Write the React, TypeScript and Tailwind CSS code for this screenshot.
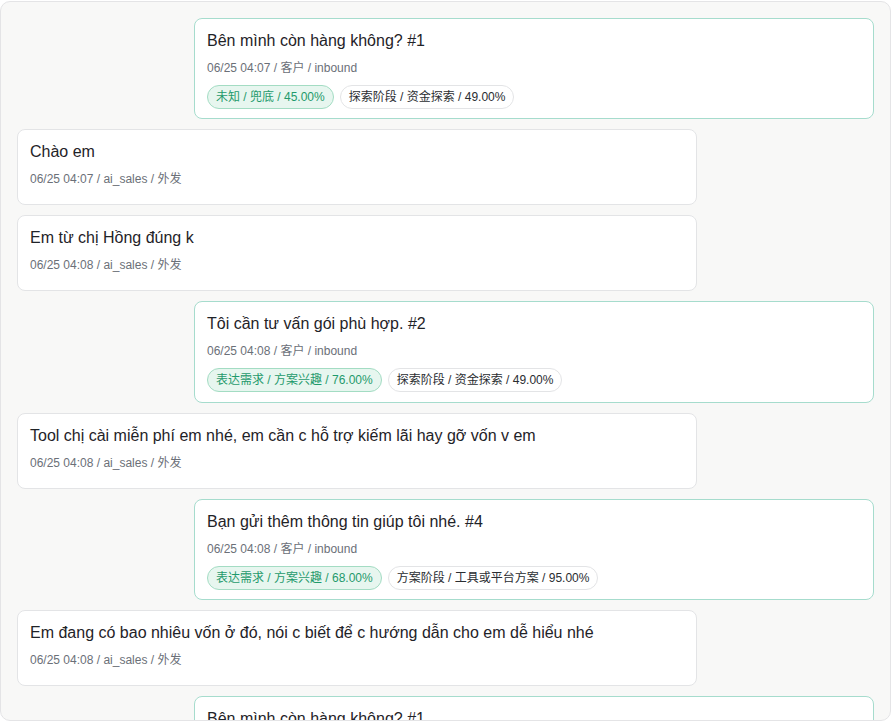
import React from 'react';

type Tag = { text: string; tone: 'green' | 'gray' };
type Msg = {
    side: 'in' | 'out';
    text: string;
    meta: string;
    tags?: Tag[];
};

const mensagens: Msg[] = [
    {
        side: 'in',
        text: 'Bên mình còn hàng không? #1',
        meta: '06/25 04:07 / 客户 / inbound',
        tags: [
            { text: '未知 / 兜底 / 45.00%', tone: 'green' },
            { text: '探索阶段 / 资金探索 / 49.00%', tone: 'gray' },
        ],
    },
    { side: 'out', text: 'Chào em', meta: '06/25 04:07 / ai_sales / 外发' },
    { side: 'out', text: 'Em từ chị Hồng đúng k', meta: '06/25 04:08 / ai_sales / 外发' },
    {
        side: 'in',
        text: 'Tôi cần tư vấn gói phù hợp. #2',
        meta: '06/25 04:08 / 客户 / inbound',
        tags: [
            { text: '表达需求 / 方案兴趣 / 76.00%', tone: 'green' },
            { text: '探索阶段 / 资金探索 / 49.00%', tone: 'gray' },
        ],
    },
    {
        side: 'out',
        text: 'Tool chị cài miễn phí em nhé, em cần c hỗ trợ kiếm lãi hay gỡ vốn v em',
        meta: '06/25 04:08 / ai_sales / 外发',
    },
    {
        side: 'in',
        text: 'Bạn gửi thêm thông tin giúp tôi nhé. #4',
        meta: '06/25 04:08 / 客户 / inbound',
        tags: [
            { text: '表达需求 / 方案兴趣 / 68.00%', tone: 'green' },
            { text: '方案阶段 / 工具或平台方案 / 95.00%', tone: 'gray' },
        ],
    },
    {
        side: 'out',
        text: 'Em đang có bao nhiêu vốn ở đó, nói c biết để c hướng dẫn cho em dễ hiểu nhé',
        meta: '06/25 04:08 / ai_sales / 外发',
    },
    {
        side: 'in',
        text: 'Bên mình còn hàng không? #1',
        meta: '06/25 04:08 / 客户 / inbound',
        tags: [
            { text: '未知 / 兜底 / 45.00%', tone: 'green' },
            { text: '探索阶段 / 资金探索 / 49.00%', tone: 'gray' },
        ],
    },
];

const fonte = { fontFamily: '"Liberation Sans", "Noto Sans CJK SC", sans-serif' };

const Bolha = ({ msg }: { msg: Msg }) => {
    const entrada = msg.side === 'in';
    return (
        <div className={`flex shrink-0 ${entrada ? 'justify-end' : 'justify-start'}`}>
            <div
                className={`w-[680px] rounded-lg border bg-white px-3 pt-[10px] ${
                    entrada ? 'border-[#a6dccd] pb-[9.4px]' : 'border-[#e3e4e6] pb-[17px]'
                }`}
            >
                <p className="text-[16px] leading-6 text-[#1f2328]">{msg.text}</p>
                <p className="mt-[7px] text-[12px] leading-4 text-[#6b7078]">{msg.meta}</p>
                {msg.tags && (
                    <div className="mt-[9px] flex gap-1.5">
                        {msg.tags.map((t) => (
                            <span
                                key={t.text}
                                className={`h-6 rounded-full border px-2 text-[12px] leading-[22px] ${
                                    t.tone === 'green'
                                        ? 'border-[#a3dcc3] bg-[#e7f6ef] text-[#1f9a6c]'
                                        : 'border-[#e3e4e6] bg-white text-[#2a2d31]'
                                }`}
                            >
                                {t.text}
                            </span>
                        ))}
                    </div>
                )}
            </div>
        </div>
    );
};

export default function App() {
    return (
        <div className="h-[721px] overflow-hidden bg-white pt-px" style={fonte}>
            <div className="flex h-[720px] flex-col gap-2.5 overflow-hidden rounded-[10px] border border-[#e4e4e6] bg-[#f8f8f7] px-4 pt-4">
                {mensagens.map((m, i) => (
                    <Bolha key={i} msg={m} />
                ))}
            </div>
        </div>
    );
}
